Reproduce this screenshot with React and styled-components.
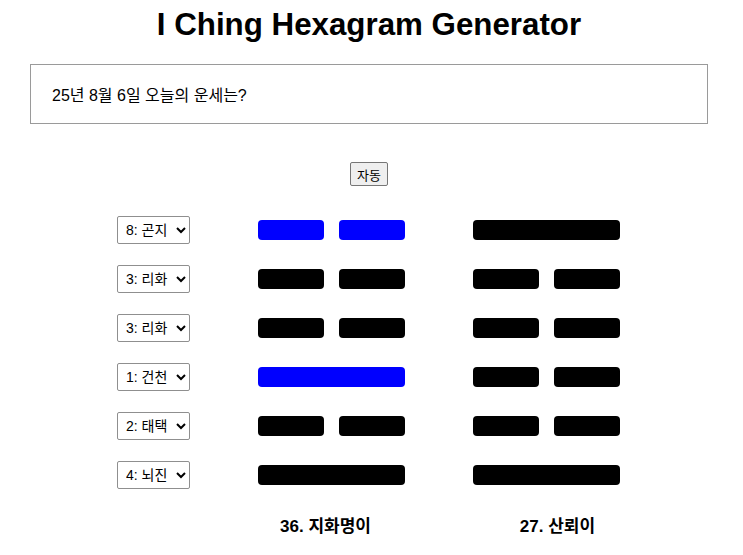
import React from "react";
import styled, { createGlobalStyle } from "styled-components";

const GlobalStyle = createGlobalStyle`
  body {
    margin: 0;
    background: #fff;
    font-family: "Liberation Sans", Arial, "Noto Sans CJK KR", sans-serif;
    color: #000;
  }
`;

const Page = styled.div`
  width: 678px;
  margin-left: 30px;
  display: flex;
  flex-direction: column;
  align-items: center;
`;

const Title = styled.h1`
  font-size: 31.3px;
  font-weight: 700;
  line-height: 37px;
  margin: 6px 0 21px;
`;

const Question = styled.div`
  box-sizing: border-box;
  width: 100%;
  height: 60px;
  border: 1px solid #9a9a9a;
  padding: 0 21px;
  display: flex;
  align-items: center;
  font-size: 16px;
`;

const AutoButton = styled.button`
  margin-top: 38px;
  height: 24px;
  padding: 0 6px;
  font-family: "Liberation Sans", "Noto Sans CJK KR", sans-serif;
  font-size: 13px;
  background: #efefef;
  border: 1px solid #767676;
  border-radius: 2px;
`;

const Board = styled.div`
  margin-top: 30px;
  margin-right: 1px;
  display: grid;
  grid-template-columns: 73px 147px 147px;
  grid-auto-rows: 28px;
  column-gap: 68px;
  row-gap: 21px;
  align-items: center;
`;

const Select = styled.select`
  box-sizing: border-box;
  width: 73px;
  height: 28px;
  padding: 0 4px;
  font-family: "Liberation Sans", "Noto Sans CJK KR", sans-serif;
  font-size: 14px;
  border: 1px solid #8f8f8f;
  border-radius: 2px;
  background: #fff;
  color: #000;
`;

const Line = styled.div`
  display: flex;
  justify-content: space-between;
  height: 20px;
`;

const Segment = styled.div`
  height: 20px;
  width: ${(p) => (p.$solid ? "147px" : "66px")};
  border-radius: 4px;
  background: ${(p) => (p.$changing ? "#0000ff" : "#000")};
`;

const Label = styled.div`
  font-size: 17px;
  font-weight: 700;
  text-align: center;
  transform: translateX(${(p) => p.$shift}px);
`;

const trigrams = ["1: 건천", "2: 태택", "3: 리화", "4: 뇌진", "5: 손풍", "6: 감수", "7: 간산", "8: 곤지"];

// each row: select value, left line [solid, changing], right line solid
const rows = [
  { pick: "8: 곤지", left: [false, true], right: true },
  { pick: "3: 리화", left: [false, false], right: false },
  { pick: "3: 리화", left: [false, false], right: false },
  { pick: "1: 건천", left: [true, true], right: false },
  { pick: "2: 태택", left: [false, false], right: false },
  { pick: "4: 뇌진", left: [true, false], right: true },
];

const HexLine = ({ solid, changing }) => (
  <Line>
    {solid ? (
      <Segment $solid $changing={changing} />
    ) : (
      <>
        <Segment $changing={changing} />
        <Segment $changing={changing} />
      </>
    )}
  </Line>
);

export default function App() {
  return (
    <>
      <GlobalStyle />
      <Page>
        <Title>I Ching Hexagram Generator</Title>
        <Question>25년 8월 6일 오늘의 운세는?</Question>
        <AutoButton>자동</AutoButton>
        <Board>
          {rows.map((r, i) => (
            <React.Fragment key={i}>
              <Select defaultValue={r.pick}>
                {trigrams.map((t) => (
                  <option key={t}>{t}</option>
                ))}
              </Select>
              <HexLine solid={r.left[0]} changing={r.left[1]} />
              <HexLine solid={r.right} />
            </React.Fragment>
          ))}
          <span />
          <Label $shift={-6}>36. 지화명이</Label>
          <Label $shift={11}>27. 산뢰이</Label>
        </Board>
      </Page>
    </>
  );
}
